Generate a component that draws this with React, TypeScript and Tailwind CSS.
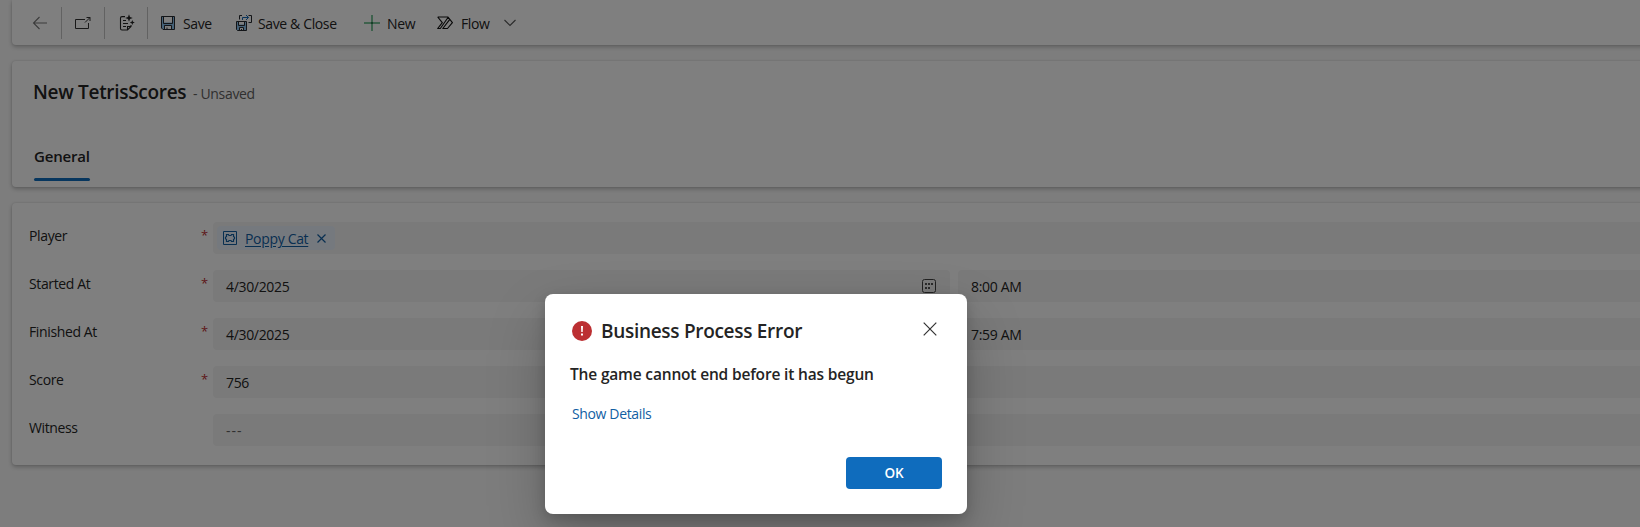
import type { ReactNode } from "react";

function BackIcon() {
  return (
    <svg width="16" height="16" viewBox="0 0 16 16" fill="none" stroke="#777" strokeWidth="1.1">
      <path d="M15 8H1.5M7.5 2L1.5 8l6 6" />
    </svg>
  );
}

function PopOutIcon() {
  return (
    <svg width="16" height="16" viewBox="0 0 16 16" fill="none" stroke="#333" strokeWidth="1">
      <path d="M10 4.500H.5v9h13V8M10 7.500l5-5M11.500 2.500H15V6" />
    </svg>
  );
}

function AssistIcon() {
  return (
    <svg width="16" height="18" viewBox="0 0 16 18" fill="none" stroke="#222" strokeWidth="1.1">
      <path d="M6 2.600H3A1.500 1.500 0 0 0 1.500 4.100v10.400A1.500 1.500 0 0 0 3 16h5.500l3.500-3.500V11M8.500 16v-3.500H12M4 6.500h3M4 9.500h5M4 12.500h3" />
      <path d="M10 .2l1 2.800 2.800 1-2.800 1-1 2.800-1-2.800L6.200 4 9 3zM13.300 6l.7 1.800 1.800.7-1.800.7-.7 1.800-.7-1.800-1.800-.7 1.800-.7z" fill="#222" stroke="none" />
    </svg>
  );
}

function SaveIcon() {
  return (
    <svg width="16" height="16" viewBox="0 0 16 16" fill="none">
      <path d="M1.500 1.500h13v13H3l-1.500-1.500z" fill="#8cc4f0" />
      <path d="M4 1.500h8v6H4z" fill="#fff" />
      <path d="M5 10.500h6v4H5z" fill="#fff" />
      <path d="M1.500 1.500h13v13H3l-1.500-1.500zM3.500 1.500v7h9v-7M4.500 14.500v-4h7v4M7 14.500v-2" stroke="#262a30" />
    </svg>
  );
}

function SaveCloseIcon() {
  return (
    <svg width="16" height="18" viewBox="0 0 16 18" fill="none">
      <path d="M.5 7.500h10v9h-9l-1-1z" fill="#8cc4f0" />
      <path d="M2.500 7.500h6v3h-6zM3 13.500h5v3H3z" fill="#fff" />
      <path d="M.5 7.500h10v9h-9l-1-1zM2.500 7.500v4h6v-4M3.500 16.500v-3h4v3M5.500 16.500V15M3.500 5.500v-4H6M12.500 1.500h3v7h-3" stroke="#262a30" />
      <path d="M6.500 6V3.500h6M10 1l2.500 2.500L10 6" stroke="#1267b4" />
    </svg>
  );
}

function PlusIcon() {
  return (
    <svg width="16" height="16" viewBox="0 0 16 16" fill="#7cc49a">
      <path d="M7 0h2v16H7z" />
      <path d="M0 7h16v2H0z" />
      <path d="M7 7h2v2H7z" fill="#2f7d50" />
    </svg>
  );
}

function FlowIcon() {
  return (
    <svg width="16" height="14" viewBox="0 0 16 14" fill="none" stroke="#111" strokeWidth="1.15" strokeLinejoin="round">
      <path d="M.7 1h10.300l4.400 5.700-4.900 5.800H5.800l6.800-8.800M.7 1l4.600 5.700L.7 12.500h2.600L11 1.500M5.300 6.700L.7 1" />
    </svg>
  );
}

function ChevronIcon() {
  return (
    <svg width="12" height="8" viewBox="0 0 12 8" fill="none" stroke="#555" strokeWidth="1.1">
      <path d="M.5 1L6 6.500 11.500 1" />
    </svg>
  );
}

function EntityIcon() {
  return (
    <svg width="14" height="14" viewBox="0 0 14 14" fill="none" stroke="#115ea3">
      <path d="M.5.5h13v13H.5z" />
      <path strokeWidth="1.2" d="M3.500 3.500h2l.5 1h2l.5-1h2v2l1 .7v1.600l-1 .7v2h-2l-.5-1H6l-.5 1h-2v-2l-1-.7V6.200l1-.7z" />
    </svg>
  );
}

function CalendarIcon() {
  return (
    <svg width="14" height="14" viewBox="0 0 14 14" fill="none">
      <rect x=".5" y=".5" width="13" height="13" rx="2" stroke="#444" />
      <path d="M3 4h2v2H3zM6 4h2v2H6zM9 4h2v2H9zM3 8h2v2H3zM6 8h2v2H6z" fill="#555" />
    </svg>
  );
}

function Divider() {
  return <div className="h-8 w-px shrink-0 bg-[#c4c4c4]" />;
}

function Row({ label, required, children }: { label: string; required?: boolean; children: ReactNode }) {
  return (
    <div className="flex h-8">
      <div className="w-[172px] text-[14px] leading-[27px] tracking-[-0.37px] text-[#242424]">{label}</div>
      <div className="w-3 text-[13px] leading-[26px] text-[#bc2f32]">{required ? "*" : ""}</div>
      <div className="flex flex-1 gap-2">{children}</div>
    </div>
  );
}

function Field({ className, children }: { className: string; children: ReactNode }) {
  return (
    <div className={`flex h-8 items-center rounded bg-[#f5f5f5] text-[14px] tracking-[-0.33px] text-[#242424] ${className}`}>
      {children}
    </div>
  );
}

const cardShadow = "bg-white shadow-[0_0_2px_rgba(0,0,0,0.12),0_2px_4px_rgba(0,0,0,0.24)]";

export default function App() {
  return (
    <div className="relative h-[527px] w-[1640px] overflow-hidden bg-[#fafafa] pl-3 font-['Open_Sans','Noto_Sans',sans-serif]">
      <div className={`h-[45px] w-[1640px] rounded-bl ${cardShadow}`}>
        <div className="flex h-[46px] items-center text-[14px] tracking-[-0.37px] whitespace-nowrap text-[#242424]">
          <div className="flex w-[49px] pl-5"><BackIcon /></div>
          <Divider />
          <div className="flex w-[42px] pl-[13px]"><PopOutIcon /></div>
          <Divider />
          <div className="flex w-[42px] pl-[14px]"><AssistIcon /></div>
          <Divider />
          <div className="flex w-[88px] items-center gap-[7px] pl-3"><SaveIcon /><span>Save</span></div>
          <div className="flex w-[128px] items-center gap-[6px]"><SaveCloseIcon /><span>Save &amp; Close</span></div>
          <div className="flex w-[73px] items-center gap-[7px]"><PlusIcon /><span>New</span></div>
          <div className="flex w-[67px] items-center gap-[8px]"><FlowIcon /><span>Flow</span></div>
          <ChevronIcon />
        </div>
      </div>

      <div className={`mt-4 h-[126px] w-[1640px] rounded-l pl-[21px] ${cardShadow}`}>
        <div className="flex h-[62px] items-baseline pt-[17px] whitespace-nowrap">
          <h1 className="w-[160px] text-[19px] leading-7 font-semibold tracking-[-0.3px] text-[#242424]">New TetrisScores</h1>
          <span className="text-[14px] tracking-[-0.33px] text-[#616161]">- Unsaved</span>
        </div>
        <div className="ml-px flex h-[58px] w-14 flex-col justify-end">
          <span className="pb-[10px] text-[15px] leading-6 font-semibold tracking-[-0.2px] text-[#242424]">General</span>
          <div className="h-[3px] rounded-full bg-[#0f6cbd]" />
        </div>
      </div>

      <div className={`mt-4 flex h-[262px] w-[1640px] flex-col gap-4 rounded-l pt-[19px] pl-[17px] ${cardShadow}`}>
        <Row label="Player" required>
          <Field className="flex-1 pl-1">
            <div className="flex h-6 w-[118px] items-center rounded bg-[#ebf3fc] pl-1.5 text-[#115ea3]">
              <EntityIcon />
              <span className="ml-2 w-[72px] underline underline-offset-2">Poppy Cat</span>
              <svg width="9" height="9" viewBox="0 0 9 9" stroke="#115ea3" strokeWidth="1.2">
                <path d="M.5.5l8 8M8.500.5l-8 8" />
              </svg>
            </div>
          </Field>
        </Row>
        <Row label="Started At" required>
          <Field className="w-[737px] justify-between pr-3.5 pl-[13px]">
            4/30/2025
            <CalendarIcon />
          </Field>
          <Field className="flex-1 pl-[13px]">8:00 AM</Field>
        </Row>
        <Row label="Finished At" required>
          <Field className="w-[737px] justify-between pr-3.5 pl-[13px]">
            4/30/2025
            <CalendarIcon />
          </Field>
          <Field className="flex-1 pl-[13px]">7:59 AM</Field>
        </Row>
        <Row label="Score" required>
          <Field className="flex-1 pl-[13px]">756</Field>
        </Row>
        <Row label="Witness">
          <Field className="flex-1 pl-[13px]"><span className="tracking-[1px] text-[#616161]">---</span></Field>
        </Row>
      </div>

      <div className="absolute inset-0 bg-black/50 pt-[294px] pl-[545px]">
        <div className="flex h-[220px] w-[422px] flex-col rounded-lg bg-white pt-[27px] pr-[25px] pl-[25px] whitespace-nowrap shadow-[0_26px_58px_rgba(0,0,0,0.22),0_5px_14px_rgba(0,0,0,0.18)]">
          <div className="flex h-5 items-center pl-0.5">
            <svg width="20" height="20" viewBox="0 0 20 20">
              <circle cx="10" cy="10" r="10" fill="#bc2f32" />
              <path d="M9 5h2l-.3 6H9.300zM9 12.500h2v2H9z" fill="#fff" />
            </svg>
            <h2 className="ml-[9px] flex-1 text-[19px] leading-7 font-semibold tracking-[-0.3px] text-[#242424]">Business Process Error</h2>
            <svg className="mr-[5px] -mt-1" width="14" height="14" viewBox="0 0 14 14" stroke="#333" strokeWidth="1.2">
              <path d="M.7.7l12.600 12.600M13.300.7L.7 13.300" />
            </svg>
          </div>
          <p className="mt-[21px] text-[15.5px] leading-6 font-semibold tracking-[-0.17px] text-[#242424]">The game cannot end before it has begun</p>
          <a className="mt-[18px] pl-0.5 text-[14px] leading-5 tracking-[-0.36px] text-[#115ea3]">Show Details</a>
          <button className="mt-[33px] h-8 w-24 self-end rounded bg-[#0f6cbd] text-[13.5px] leading-8 font-semibold text-white">OK</button>
        </div>
      </div>
    </div>
  );
}
